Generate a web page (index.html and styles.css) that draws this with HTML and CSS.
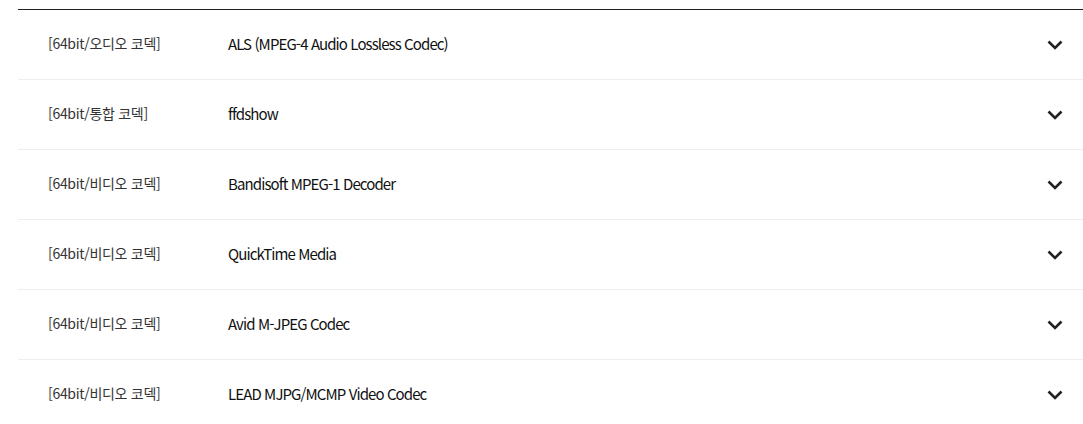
FILE: index.html
```html
<!DOCTYPE html>
<html lang="ko">
<head>
    <meta charset="UTF-8">
    <meta name="viewport" content="width=device-width, initial-scale=1.0">
    <title>코덱 목록</title>
    <link rel="stylesheet" href="styles.css">
</head>
<body>

    <!-- Codec list -->
    <ul class="codec-list">
        <li class="codec-row">
            <span class="codec-type">[64bit/오디오 코덱]</span>
            <span class="codec-name">ALS (MPEG-4 Audio Lossless Codec)</span>
            <svg class="chevron" viewBox="0 0 16 10"><path d="M1.5 1.5 L8 8 L14.5 1.5"/></svg>
        </li>
        <li class="codec-row">
            <span class="codec-type">[64bit/통합 코덱]</span>
            <span class="codec-name">ffdshow</span>
            <svg class="chevron" viewBox="0 0 16 10"><path d="M1.5 1.5 L8 8 L14.5 1.5"/></svg>
        </li>
        <li class="codec-row">
            <span class="codec-type">[64bit/비디오 코덱]</span>
            <span class="codec-name">Bandisoft MPEG-1 Decoder</span>
            <svg class="chevron" viewBox="0 0 16 10"><path d="M1.5 1.5 L8 8 L14.5 1.5"/></svg>
        </li>
        <li class="codec-row">
            <span class="codec-type">[64bit/비디오 코덱]</span>
            <span class="codec-name">QuickTime Media</span>
            <svg class="chevron" viewBox="0 0 16 10"><path d="M1.5 1.5 L8 8 L14.5 1.5"/></svg>
        </li>
        <li class="codec-row">
            <span class="codec-type">[64bit/비디오 코덱]</span>
            <span class="codec-name">Avid M-JPEG Codec</span>
            <svg class="chevron" viewBox="0 0 16 10"><path d="M1.5 1.5 L8 8 L14.5 1.5"/></svg>
        </li>
        <li class="codec-row">
            <span class="codec-type">[64bit/비디오 코덱]</span>
            <span class="codec-name">LEAD MJPG/MCMP Video Codec</span>
            <svg class="chevron" viewBox="0 0 16 10"><path d="M1.5 1.5 L8 8 L14.5 1.5"/></svg>
        </li>
    </ul>

</body>
</html>
```

FILE: styles.css
```css
body {
    font-family: "Noto Sans CJK KR", "Noto Sans", sans-serif;
    background-color: #fff;
    margin: 0;
    padding: 9px 0 0 18px;
    overflow: hidden;
}

.codec-list {
    list-style: none;
    margin: 0;
    padding: 0;
    width: 1080px;
    border-top: 1px solid #222;
}

.codec-row {
    display: grid;
    grid-template-columns: 180px 1fr 16px;
    align-items: center;
    height: 69px;
    padding: 0 35px 0 30px;
    border-bottom: 1px solid #eee;
}

.codec-type {
    color: #333;
    font-size: 14px;
    letter-spacing: -0.3px;
    margin-top: -3px;
}

.codec-name {
    color: #111;
    font-size: 15px;
    letter-spacing: -0.9px;
    margin-top: -3px;
}

.chevron {
    width: 16px;
    height: 10px;
    fill: none;
    stroke: #222;
    stroke-width: 2.6;
}
```
